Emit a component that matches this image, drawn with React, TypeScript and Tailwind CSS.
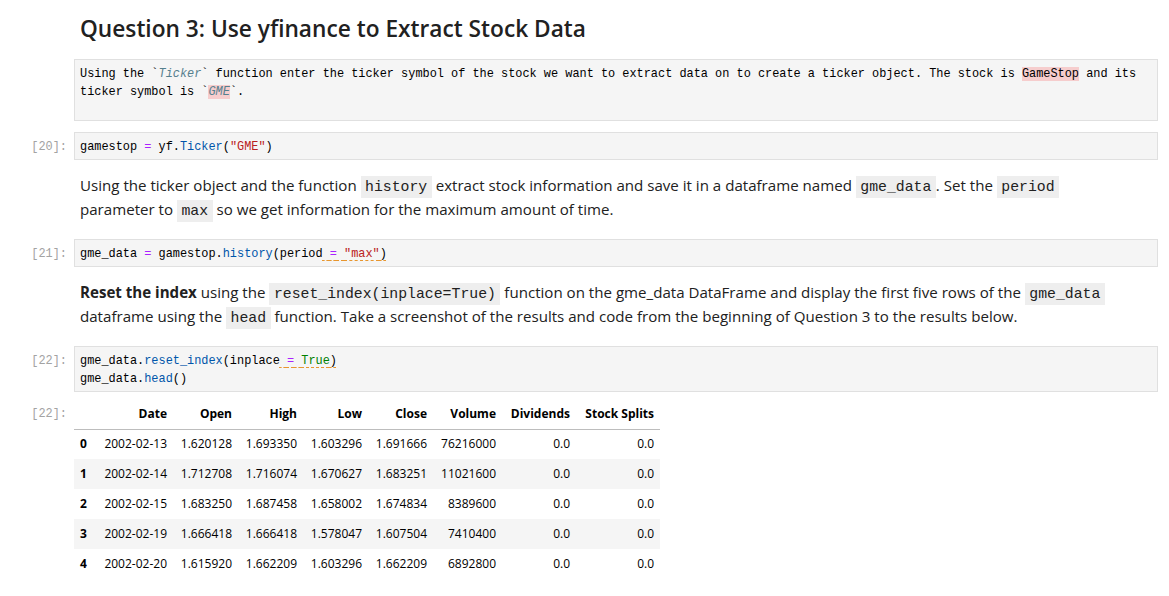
import React from "react";

const rows = [
  ["0", "2002-02-13", "1.620128", "1.693350", "1.603296", "1.691666", "76216000", "0.0", "0.0"],
  ["1", "2002-02-14", "1.712708", "1.716074", "1.670627", "1.683251", "11021600", "0.0", "0.0"],
  ["2", "2002-02-15", "1.683250", "1.687458", "1.658002", "1.674834", "8389600", "0.0", "0.0"],
  ["3", "2002-02-19", "1.666418", "1.666418", "1.578047", "1.607504", "7410400", "0.0", "0.0"],
  ["4", "2002-02-20", "1.615920", "1.662209", "1.603296", "1.662209", "6892800", "0.0", "0.0"],
];

const headers = ["Date", "Open", "High", "Low", "Close", "Volume", "Dividends", "Stock Splits"];

function Prompt({ n, top = "pt-[5px]" }: { n?: number; top?: string }) {
  return (
    <div
      className={`w-[74px] shrink-0 pr-[7px] text-right font-['Liberation_Mono',monospace] text-[11.9px] leading-[18px] text-[#a3a3a3] ${top}`}
    >
      {n !== undefined ? `[${n}]:` : ""}
    </div>
  );
}

function CodeBox({ children, h }: { children: React.ReactNode; h?: string }) {
  return (
    <div
      className={`mr-[11px] flex-1 border border-[#e0e0e0] bg-[#f5f5f5] px-[5px] pt-[5px] pb-[3px] font-['Liberation_Mono',monospace] text-[11.9px] leading-[18px] text-black whitespace-pre ${h ?? ""}`}
    >
      {children}
    </div>
  );
}

const Op = ({ children }: { children: React.ReactNode }) => <span className="text-[#aa22ff]">{children}</span>;
const Prop = ({ children }: { children: React.ReactNode }) => <span className="text-[#0055aa]">{children}</span>;
const Str = ({ children }: { children: React.ReactNode }) => <span className="text-[#ba2121]">{children}</span>;
const Warn = ({ children }: { children: React.ReactNode }) => (
  <span className="underline decoration-dashed decoration-[#e8962e] underline-offset-[3px]">{children}</span>
);

// inline code inside rendered markdown
function IC({ children }: { children: React.ReactNode }) {
  return (
    <code className="bg-[#eeeeee] px-[4.5px] py-[3px] font-['Liberation_Mono',monospace] text-[14.8px] leading-[14px] text-[#212121]">
      {children}
    </code>
  );
}

function Para({ children }: { children: React.ReactNode }) {
  return (
    <div className="flex">
      <div className="w-[80px] shrink-0" />
      <p className="h-[48px] whitespace-nowrap font-['Open_Sans',sans-serif] text-[15.1px] leading-[24px] text-[#212121]">
        {children}
      </p>
    </div>
  );
}

export default function App() {
  return (
    <div className="w-[1169px] bg-white pb-[18px] font-['Open_Sans',sans-serif]">
      <div className="flex h-[59px] items-center pl-[80px]">
        <h2 className="text-[22.7px] font-semibold text-[#212121]">Question 3: Use yfinance to Extract Stock Data</h2>
      </div>

      <div className="flex">
        <Prompt />
        <CodeBox h="h-[62px]">
          {"Using the `"}
          <i className="text-[#55808e]">Ticker</i>
          {"` function enter the ticker symbol of the stock we want to extract data on to create a ticker object. The stock is "}
          <span className="bg-[#f6cdcd]">GameStop</span>
          {" and its\nticker symbol is `"}
          <span className="bg-[#f6cdcd]">
            <i className="text-[#55808e]">GME</i>
          </span>
          {"`."}
        </CodeBox>
      </div>

      <div className="mt-[11px] flex">
        <Prompt n={20} top="pt-[6px]" />
        <CodeBox>
          {"gamestop "}
          <Op>=</Op>
          {" yf."}
          <Prop>Ticker</Prop>
          {"("}
          <Str>"GME"</Str>
          {")"}
        </CodeBox>
      </div>

      <div className="mt-[13px]">
        <Para>
          Using the ticker object and the function <IC>history</IC> extract stock information and save it in a
          dataframe named <IC>gme_data</IC>. Set the <IC>period</IC>
          <br />
          parameter to <IC>max</IC> so we get information for the maximum amount of time.
        </Para>
      </div>

      <div className="mt-[18px] flex">
        <Prompt n={21} top="pt-[6px]" />
        <CodeBox>
          {"gme_data "}
          <Op>=</Op>
          {" gamestop."}
          <Prop>history</Prop>
          {"(period"}
          <Warn>
            {" "}
            <Op>=</Op> <Str>"max"</Str>)
          </Warn>
        </CodeBox>
      </div>

      <div className="mt-[13px]">
        <Para>
          <strong className="font-bold">Reset the index</strong> using the <IC>reset_index(inplace=True)</IC> function
          on the gme_data DataFrame and display the first five rows of the <IC>gme_data</IC>
          <br />
          dataframe using the <IC>head</IC> function. Take a screenshot of the results and code from the beginning of
          Question 3 to the results below.
        </Para>
      </div>

      <div className="mt-[18px] flex">
        <Prompt n={22} top="pt-[6px]" />
        <CodeBox>
          {"gme_data."}
          <Prop>reset_index</Prop>
          {"(inplace"}
          <Warn>
            {" "}
            <Op>=</Op> <span className="text-[#008000]">True</span>)
          </Warn>
          {"\ngme_data."}
          <Prop>head</Prop>
          {"()"}
        </CodeBox>
      </div>

      <div className="mt-[9px] flex">
        <Prompt n={22} top="pt-[4px]" />
        <table className="w-[586px] table-fixed border-collapse text-[12px] text-black">
          <colgroup>
            <col className="w-[22px]" />
            <col className="w-[77px]" />
            <col className="w-[65px]" />
            <col className="w-[65px]" />
            <col className="w-[65px]" />
            <col className="w-[65px]" />
            <col className="w-[69px]" />
            <col className="w-[74px]" />
            <col className="w-[84px]" />
          </colgroup>
          <thead>
            <tr className="h-[28px] border-b border-[#bdbdbd]">
              <th />
              {headers.map((h) => (
                <th key={h} className="pr-[6px] pb-[2px] text-right font-bold whitespace-nowrap">
                  {h}
                </th>
              ))}
            </tr>
          </thead>
          <tbody>
            {rows.map((r, i) => (
              <tr key={r[0]} className={i % 2 === 1 ? "h-[30px] bg-[#f5f5f5]" : "h-[30px]"}>
                <th className="pl-[6px] text-left font-bold">{r[0]}</th>
                {r.slice(1).map((c, j) => (
                  <td key={j} className="pr-[6px] text-right whitespace-nowrap">
                    {c}
                  </td>
                ))}
              </tr>
            ))}
          </tbody>
        </table>
      </div>
    </div>
  );
}
